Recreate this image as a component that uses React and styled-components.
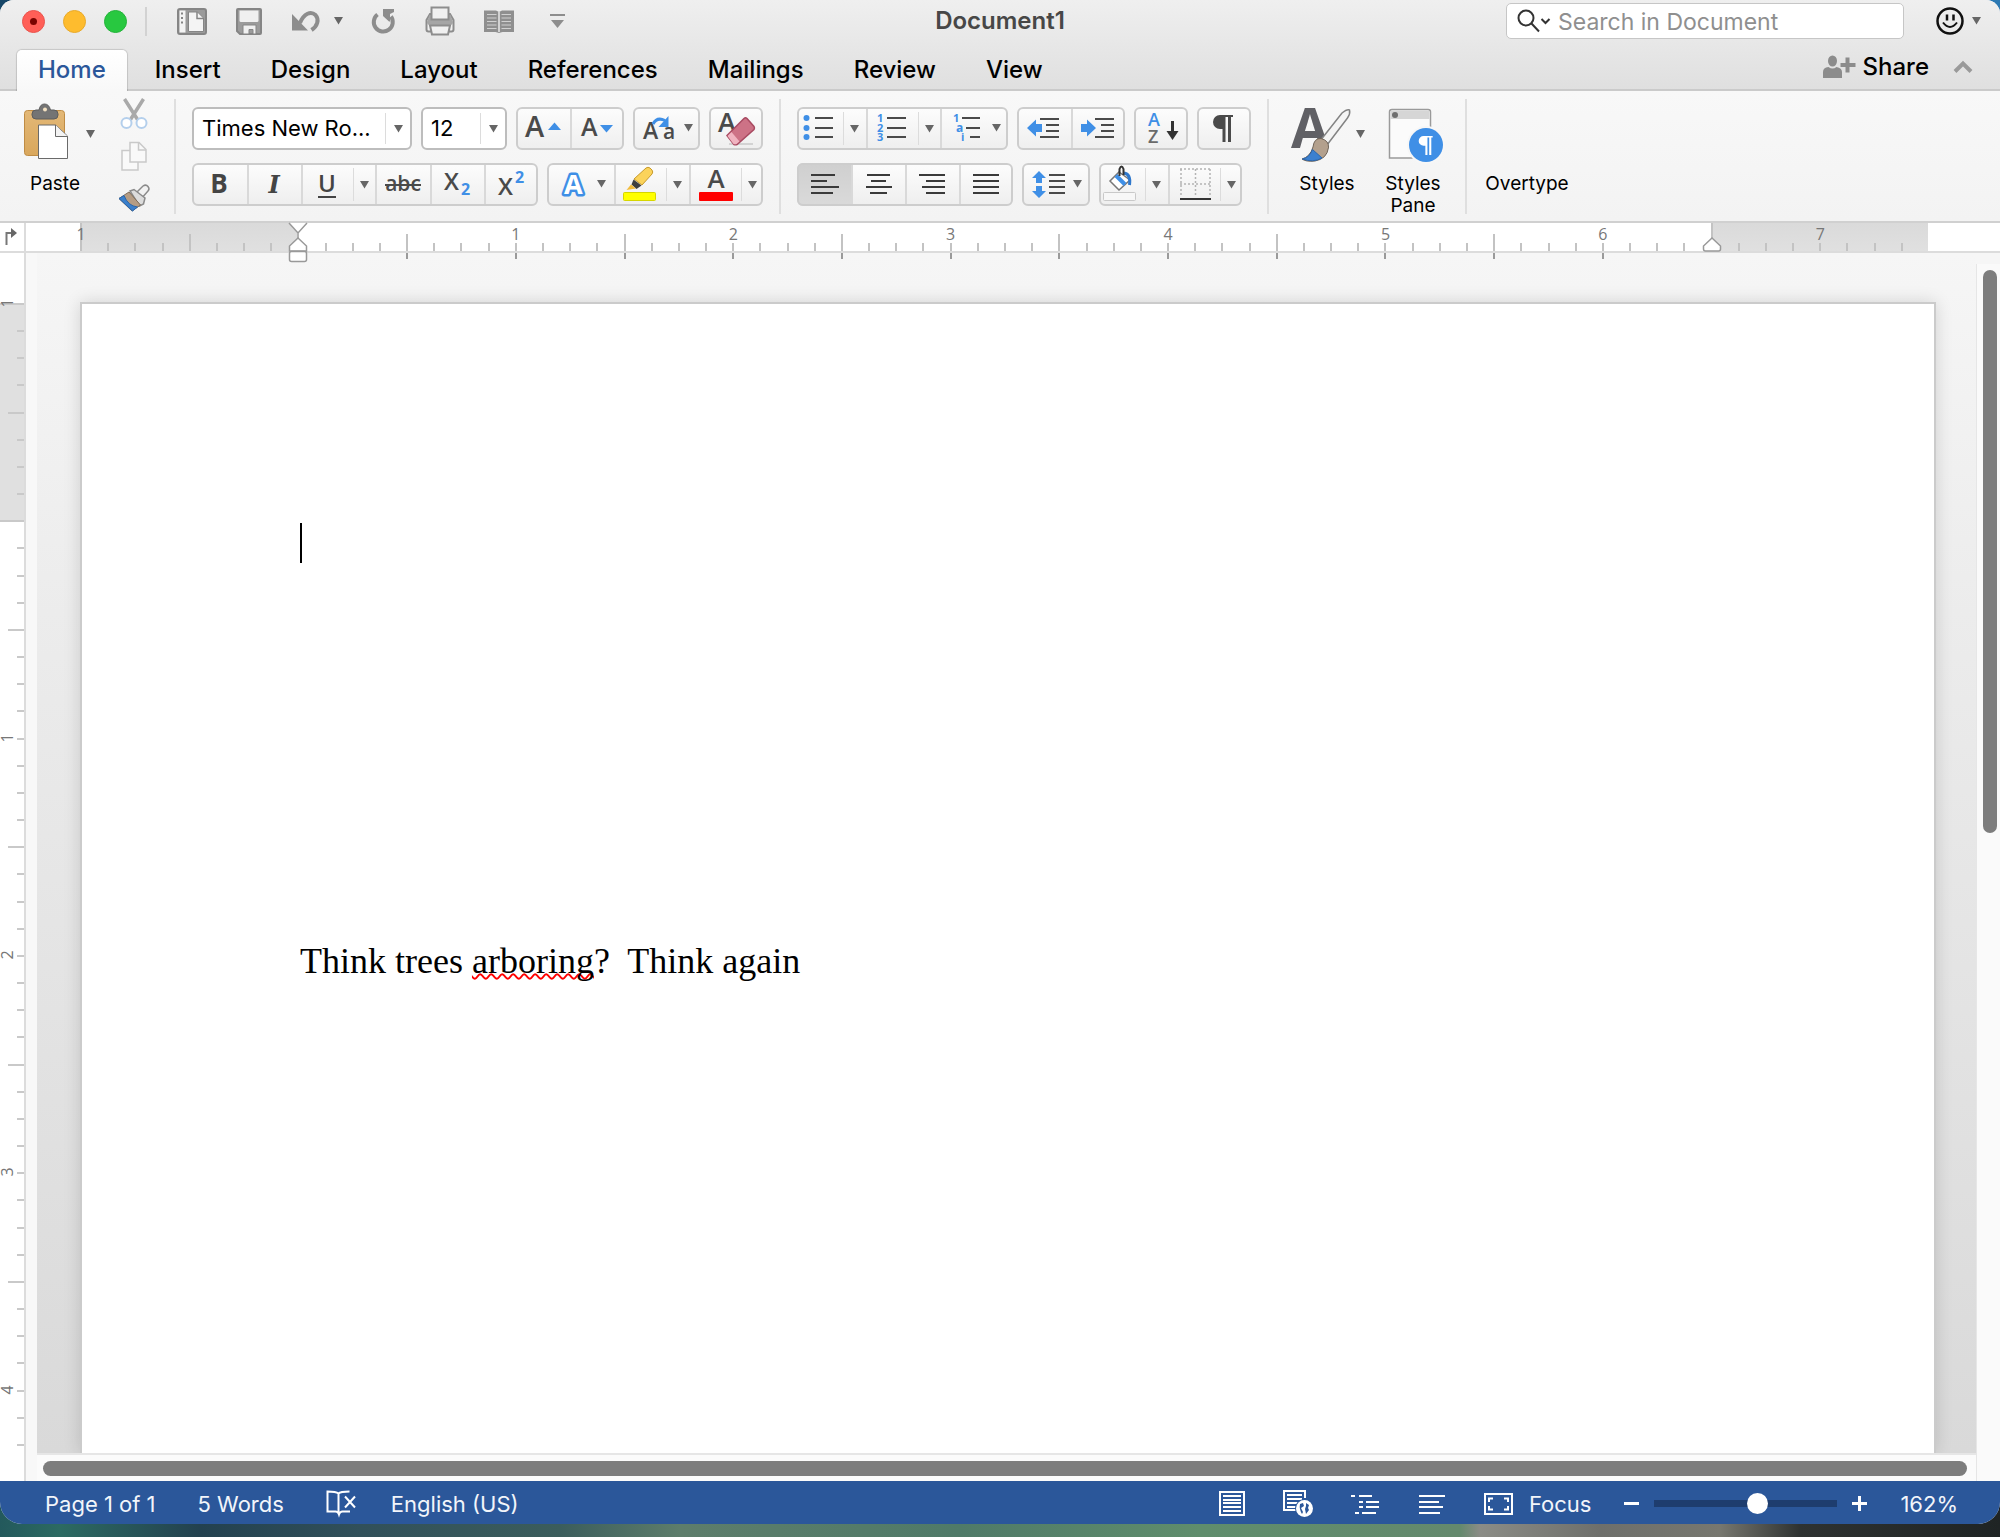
import React from "react";
import styled, { createGlobalStyle, css } from "styled-components";

const UI = `Inter, "Liberation Sans", sans-serif`;
const GLYPH = `"Open Sans", "Noto Sans", sans-serif`;
const BLUE = "#3f8fe6";
const INK = "#4a4a4a";

const GlobalStyle = createGlobalStyle`
  *, *::before, *::after { box-sizing: border-box; }
  body { margin: 0; font-family: ${UI}; color: #000; }
  button, input, select { font-family: inherit; }
  svg { display: block; flex: none; overflow: visible; }
`;

/* ---------- window frame ---------- */

const Desktop = styled.div`
  min-height: 100vh;
  display: flex;
  flex-direction: column;
  padding-bottom: 13px;
  background:
    linear-gradient(90deg, #164668 0 50%, #2d79b3 50%) top / 100% 40px no-repeat,
    linear-gradient(90deg, #23595c 0, #2c6a62 3%, #23414f 10%, #31505a 18%, #3b5d5c 28%, #5d7d6b 34%, #4f7a68 48%, #5f8d6c 60%, #64896d 73%, #8b8c86 74%, #6e6f6b 80%, #77776f 86%, #2e3231 90%, #1f2424 100%);
`;

const Window = styled.div`
  flex: 1;
  display: flex;
  flex-direction: column;
  border-radius: 14px 14px 22px 22px;
  overflow: hidden;
  background: #f6f6f6;
`;

const BareButton = styled.button`
  appearance: none;
  border: 0;
  padding: 0;
  margin: 0;
  background: none;
  color: inherit;
  display: flex;
  align-items: center;
  justify-content: center;
`;

const Header = styled.header`
  background: linear-gradient(#efefef, #dfdfdf);
  box-shadow: inset 0 -2px 0 #cacaca;
`;

const TitleBar = styled.div`
  height: 42px;
  display: grid;
  grid-template-columns: 1fr auto 1fr;
  align-items: center;
`;

const TitleLeft = styled.div`
  display: flex;
  align-items: center;
  padding-left: 22px;
`;

const Lights = styled.div`
  display: flex;
  gap: 18px;
`;

const Light = styled(BareButton)`
  width: 23px;
  height: 23px;
  border-radius: 50%;
  background: ${(p) => p.$fill};
  border: 1px solid ${(p) => p.$edge};
`;

const CloseDot = styled.span`
  width: 7px;
  height: 7px;
  border-radius: 50%;
  background: #7a0400;
`;

const TitleRule = styled.div`
  width: 2px;
  height: 29px;
  margin: 0 30px 0 18px;
  background: #d2d2d2;
`;

const QuickTools = styled.div`
  display: flex;
  align-items: center;
  gap: 29px;
`;

const UndoPair = styled.div`
  display: flex;
  align-items: center;
  gap: 13px;
`;

const DocTitle = styled.h1`
  margin: 0;
  font-size: 24px;
  line-height: 28px;
  font-weight: 600;
  color: #474747;
`;

const TitleRight = styled.div`
  display: flex;
  align-items: center;
  justify-content: flex-end;
  gap: 32px;
  padding-right: 19px;
`;

const SearchBox = styled.label`
  width: 398px;
  height: 36px;
  display: flex;
  align-items: center;
  padding-left: 10px;
  background: #fff;
  border: 1px solid #c6c6c6;
  border-radius: 5px;
`;

const SearchInput = styled.input`
  flex: 1;
  min-width: 0;
  height: 30px;
  border: 0;
  outline: 0;
  padding: 2px 0 0 6px;
  background: none;
  font-size: 23px;
  color: #000;
  &::placeholder { color: #8f8f8f; opacity: 1; }
`;

const FaceButton = styled(BareButton)`
  gap: 8px;
`;

const TabRow = styled.div`
  height: 49px;
  display: flex;
  align-items: flex-end;
  justify-content: space-between;
  padding: 0 27px 0 17px;
`;

const Tabs = styled.nav`
  display: flex;
  align-items: flex-end;
`;

const Tab = styled(BareButton)`
  height: 41px;
  padding: 0 25px 2px;
  font-size: 24px;
  font-weight: 500;
  border-radius: 5px 5px 0 0;
  ${(p) =>
    p.$active &&
    css`
      padding: 0 21px 2px;
      margin-right: 3px;
      color: #2b579a;
      background: linear-gradient(#fff, #f8f8f8);
      box-shadow: 0 0 1px 1px rgba(0, 0, 0, 0.14);
      clip-path: inset(-2px -2px 0 -2px);
    `}
`;

const ShareArea = styled.div`
  display: flex;
  align-items: center;
  gap: 24px;
  height: 49px;
`;

const ShareButton = styled(BareButton)`
  gap: 7px;
  font-size: 24px;
  font-weight: 500;
`;

/* ---------- ribbon ---------- */

const Ribbon = styled.section`
  display: flex;
  height: 132px;
  padding: 2px 12px 0;
  background: linear-gradient(#f8f8f8, #f3f3f3);
  border-bottom: 2px solid #d0d0d0;
`;

const RibbonRule = styled.div`
  flex: none;
  width: 2px;
  height: 115px;
  margin: 6px 16px 0;
  background: #dfdfdf;
`;

const BigButton = styled(BareButton)`
  flex: none;
  flex-direction: column;
  justify-content: flex-start;
  width: ${(p) => p.$w}px;
  height: 122px;
  margin-top: 4px;
  font-size: 19px;
  line-height: 22px;
`;

const BigGap = styled.div`
  flex: none;
  width: 8px;
`;

const BlankArt = styled.span`
  height: 76px;
`;

const ClipColumn = styled.div`
  flex: none;
  display: flex;
  flex-direction: column;
  width: 46px;
  margin-left: 14px;
`;

const ClipButton = styled(BareButton)`
  width: 44px;
  height: 42px;
`;

const ToolRows = styled.div`
  flex: none;
  display: flex;
  flex-direction: column;
  gap: 13px;
  padding-top: 14px;
`;

const ToolRow = styled.div`
  display: flex;
  gap: 9px;
`;

const Group = styled.div`
  position: relative;
  display: flex;
  height: 43px;
  border-radius: 6px;
  background: linear-gradient(#fdfdfd, #eeeeee);
  &::after {
    content: "";
    position: absolute;
    inset: 0;
    border: 2px solid #cdcdcd;
    border-radius: 6px;
    pointer-events: none;
  }
`;

const Tool = styled(BareButton)`
  align-items: flex-end;
  width: ${(p) => p.$w}px;
  height: 43px;
  background: ${(p) => (p.$on ? "linear-gradient(#cfcfcf, #dadada)" : "none")};
  &:first-child { border-radius: 6px 0 0 6px; }
  & + & { border-left: 2px solid #d9d9d9; }
`;

const DropTool = styled(BareButton)`
  width: ${(p) => p.$w}px;
  height: 43px;
  background: linear-gradient(#dcdcdc, #dcdcdc) left center / 1px 33px no-repeat;
  & + button { border-left: 2px solid #d9d9d9; }
`;

const Field = styled.label`
  position: relative;
  display: flex;
  width: ${(p) => p.$w}px;
  height: 43px;
  background: #fff;
  border: 2px solid #bdbdbd;
  border-radius: 6px;
`;

const Select = styled.select`
  appearance: none;
  width: 100%;
  border: 0;
  outline: 0;
  background: none;
  padding: 0 26px 1px 8px;
  font-size: 22px;
  color: #000;
`;

const FieldDrop = styled.span`
  position: absolute;
  inset: 4px 0 4px auto;
  width: 25px;
  display: flex;
  align-items: center;
  justify-content: center;
  border-left: 1px solid #dcdcdc;
  pointer-events: none;
`;

/* ---------- rulers ---------- */

const RulerBar = styled.div`
  position: relative;
  z-index: 1;
  display: flex;
  height: 30px;
  background: #fff;
  border-bottom: 2px solid #dcdcdc;
`;

const RulerCorner = styled(BareButton)`
  width: 26px;
  padding-right: 4px;
  border-right: 2px solid #dcdcdc;
`;

const Scale = styled.div`
  flex: 1;
  display: grid;
  grid-template-columns: repeat(68, 1fr);
  margin: 0 72px 0 54px;
`;

const Mark = styled.div`
  position: relative;
  background: ${(p) => (p.$margin ? "linear-gradient(#dadada, #e0e0e0)" : "#fff")};
  &::before {
    content: "";
    position: absolute;
    left: 0;
    bottom: 0;
    width: 2px;
    height: ${(p) => p.$len}px;
    background: #c3c3c3;
  }
  ${(p) =>
    p.$below &&
    css`
      &::after {
        content: "";
        position: absolute;
        left: 0;
        top: 30px;
        width: 2px;
        height: 6px;
        background: #9a9a9a;
      }
    `}
`;

const MarkText = styled.span`
  position: absolute;
  left: 1px;
  top: 1px;
  transform: translateX(-50%);
  font: 16px/20px ${GLYPH};
  color: #777;
`;

const Marker = styled.svg`
  position: absolute;
  left: ${(p) => p.$x}px;
  top: 0;
`;

const Workspace = styled.main`
  flex: 1;
  display: grid;
  grid-template-columns: 26px minmax(0, 1fr) 24px;
  grid-template-rows: minmax(0, 1fr);
`;

const SideRuler = styled.div`
  background: #fff;
  border-right: 2px solid #dcdcdc;
  padding: 50px 0 10px;
  display: grid;
  grid-template-rows: repeat(43, 1fr);
`;

const SideMark = styled.div`
  position: relative;
  background: ${(p) => (p.$margin ? "#e0e0e0" : "#fff")};
  &::before {
    content: "";
    position: absolute;
    right: 0;
    top: 0;
    width: ${(p) => p.$len}px;
    height: 2px;
    background: #c9c9c9;
  }
`;

const SideText = styled.span`
  position: absolute;
  left: -3px;
  top: -10px;
  width: 20px;
  text-align: center;
  transform: rotate(-90deg);
  font: 16px/20px ${GLYPH};
  color: #777;
`;

/* ---------- document ---------- */

const View = styled.div`
  display: flex;
  flex-direction: column;
  padding-left: 11px;
  background: #f8f8f8;
`;

const Canvas = styled.div`
  flex: 1;
  display: flex;
  padding: 49px 40px 0 44px;
  overflow: hidden;
  background: linear-gradient(#f6f6f6, #ececec 30%, #d9d9d9);
  border-bottom: 2px solid #e6e6e6;
`;

const Page = styled.article`
  flex: 1;
  padding: 219px 219px 0 218px;
  background: #fff;
  border: 2px solid #cbcbcb;
  border-bottom: 0;
  margin-left: -1px;
  box-shadow: 0 0 16px rgba(0, 0, 0, 0.14);
  font: 36px/36px "Liberation Serif", serif;
`;

const Line = styled.p`
  margin: 0;
  min-height: 42px;
  white-space: pre-wrap;
`;

const Cursor = styled.span`
  display: block;
  width: 2px;
  height: 40px;
  background: #000;
`;

const Misspelled = styled.span`
  text-decoration: underline wavy #f00 2px;
  text-decoration-skip-ink: none;
  text-underline-offset: 0;
`;

const HTrack = styled.div`
  height: 26px;
  padding: 6px 9px 0 6px;
  background: #fbfbfb;
`;

const HThumb = styled.div`
  height: 15px;
  border-radius: 8px;
  background: #7d7d7d;
`;

const VTrack = styled.div`
  margin-top: 11px;
  padding: 6px 3px 0 6px;
  background: #fafafa;
  border-left: 1px solid #e6e6e6;
`;

const VThumb = styled.div`
  height: 46.5%;
  border-radius: 8px;
  background: #7d7d7d;
`;

/* ---------- status bar ---------- */

const Status = styled.footer`
  height: 43px;
  display: flex;
  align-items: center;
  justify-content: space-between;
  padding: 2px 42px 0 45px;
  color: #f2f5fa;
  font-size: 22px;
  background: #2b579a;
`;

const StatusPart = styled.div`
  display: flex;
  align-items: center;
  gap: ${(p) => p.$gap}px;
`;

const StatusText = styled.span`
  padding-right: 8px;
`;

const FocusButton = styled(BareButton)`
  gap: 16px;
  font-size: 22px;
`;

const ZoomPart = styled.div`
  display: flex;
  align-items: center;
  gap: 14px;
`;

const ZoomRange = styled.input`
  appearance: none;
  width: 183px;
  height: 22px;
  margin: 0;
  background: linear-gradient(#1e3d6e, #1e3d6e) center / 100% 7px no-repeat;
  border-radius: 4px;
  &::-webkit-slider-thumb {
    appearance: none;
    width: 21px;
    height: 21px;
    border-radius: 50%;
    background: #fff;
  }
`;

/* ---------- drawings ---------- */

const Svg = ({ w, h, children, ...rest }) => (
  <svg width={w} height={h} viewBox={`0 0 ${w} ${h}`} fill="none" aria-hidden="true" {...rest}>
    {children}
  </svg>
);

const T = ({ size, fill = INK, weight = 600, family = GLYPH, children, ...rest }) => (
  <text fontSize={size} fill={fill} fontWeight={weight} fontFamily={family} {...rest}>
    {children}
  </text>
);

const Caret = ({ fill = "#666" }) => (
  <Svg w={9} h={8}><path d="M0 0h9L4.500 7.500z" fill={fill} /></Svg>
);

const Rows = ({ x1, x2, ys, c = INK }) =>
  ys.map((y, i) => (
    <path
      key={y}
      d={`M${Array.isArray(x1) ? x1[i] : x1} ${y}H${Array.isArray(x2) ? x2[i] : x2}`}
      stroke={c}
      strokeWidth="2"
    />
  ));

const G = "#8d8d8d";

const SidebarIcon = () => (
  <Svg w={30} h={27}>
    <rect x="1" y="1" width="28" height="25" rx="2" fill="#9b9b9b" stroke="#858585" strokeWidth="2" />
    <path d="M2.500 2.500h6v22h-6z" fill="#f4f4f4" />
    <path d="M4 5.500h2M4 10h2M4 14.500h2" stroke="#858585" strokeWidth="2" />
    <path d="M11.500 4h9l6 6v13.500h-15z" fill="#f4f4f4" stroke="#858585" />
    <path d="M20 4v6.500h6.500" stroke="#858585" strokeWidth="1.500" />
  </Svg>
);

const SaveIcon = () => (
  <Svg w={26} h={27}>
    <path d="M2 1h22a1 1 0 0 1 1 1v23a1 1 0 0 1-1 1H4l-3-3V2a1 1 0 0 1 1-1z" fill="#9b9b9b" stroke="#858585" strokeWidth="2" />
    <path d="M3.500 2.500h19v10q0 1.500-1.500 1.500H5q-1.500 0-1.500-1.500z" fill="#f0f0f0" />
    <path d="M7 26v-9h13v9h-3v-4.500h-4V26z" fill="#f0f0f0" stroke="#858585" />
  </Svg>
);

const UndoIcon = () => (
  <Svg w={30} h={24}>
    <path d="M9 14C13 4 20 2 24.500 6c4 4.500 2 11-4 15" stroke={G} strokeWidth="4" />
    <path d="M1 5l16 16.500H1z" fill={G} />
  </Svg>
);

const RedoIcon = () => (
  <Svg w={24} h={26}>
    <path d="M5.500 6.500A9.500 9.500 0 1 0 19 8.500" stroke={G} strokeWidth="4" />
    <path d="M11 1h11v3l-4 2v7.500h-1L11 8z" fill={G} />
  </Svg>
);

const PrintIcon = () => (
  <Svg w={30} h={30}>
    <path d="M5 8L1.500 14v9.500q0 2 2 2h23q2 0 2-2V14L25 8z" fill="#f0f0f0" stroke={G} strokeWidth="2" />
    <path d="M4.500 9h21L28 16q0 3-3 3H5q-3 0-3-3z" fill="#a5a5a5" />
    <path d="M6.500 1.500h17v12h-17zM5 19.500h20l-2 9H7z" fill="#f0f0f0" stroke={G} strokeWidth="2" />
  </Svg>
);

const BookIcon = () => (
  <Svg w={30} h={24}>
    <path d="M0 1.500h12l3 1.500 3-1.500h12V23H18.500L15 24l-3.500-1H0z" fill="#8f8f8f" />
    <path d="M15 3v20" stroke="#e9e9e9" strokeWidth="1.500" />
    <path d="M3 5.500h9.500M3 9h9.500M3 12.500h9.500M3 16h9.500M3 19.500h9.500M17.500 5.500H27M17.500 9H27M17.500 12.500H27M17.500 16H27M17.500 19.500H27" stroke="#d0d0d0" strokeWidth="1.200" />
  </Svg>
);

const CustomizeIcon = () => (
  <Svg w={29} h={14}><path d="M7 0h15v2H7zM8 6h13l-6.500 8z" fill={G} /></Svg>
);

const SearchIcon = () => (
  <Svg w={35} h={24}>
    <circle cx="9" cy="9" r="7.500" stroke="#333" strokeWidth="2" />
    <path d="M14.500 14.500l7.500 8M24.500 10l4 4 4-4" stroke="#333" strokeWidth="2" />
  </Svg>
);

const FaceIcon = () => (
  <Svg w={28} h={28}>
    <circle cx="14" cy="14" r="12.500" stroke="#111" strokeWidth="2.500" />
    <path d="M11 7.500v6M17.500 7.500v6" stroke="#111" strokeWidth="2.500" />
    <path d="M7 15.500q7 9 14 0" stroke="#111" strokeWidth="2" />
  </Svg>
);

const ShareIcon = () => (
  <Svg w={33} h={24}>
    <ellipse cx="9.500" cy="6" rx="4.500" ry="5.500" fill="#8c8c8c" />
    <path d="M0 23v-6q0-4.500 5.500-5 4 3 8 0Q19 13 19 17v6z" fill="#8c8c8c" />
    <path d="M24.500 2.500v15M17.500 10h15" stroke="#8c8c8c" strokeWidth="4" />
  </Svg>
);

const CollapseIcon = () => (
  <Svg w={20} h={14}><path d="M2 11.500l8-8 8 8" stroke="#9a9a9a" strokeWidth="4" /></Svg>
);

const PasteIcon = () => (
  <Svg w={86} h={76}>
    <defs>
      <linearGradient id="board" x2="0" y2="1"><stop stopColor="#e3b877" /><stop offset="1" stopColor="#d9a75c" /></linearGradient>
    </defs>
    <rect x="12.500" y="13.500" width="40" height="45" rx="3" fill="url(#board)" stroke="#bf8c45" />
    <path d="M20 17q0-4 4-4h3q1-6 5.500-6t6 6H42q4 0 4 4v1q0 4-4 4H24q-4 0-4-4z" fill="#747474" stroke="#5d5d5d" />
    <circle cx="33" cy="12.500" r="2" fill="#f4e2c2" />
    <path d="M26.500 28h17L55.500 39v22.500h-29z" fill="#fff" stroke="#6a6a6a" />
    <path d="M43.500 28v11.500h12" fill="#f3f3f3" stroke="#6a6a6a" />
    <path d="M74 33h9l-4.500 8z" fill="#666" />
  </Svg>
);

const ScissorsIcon = () => (
  <Svg w={28} h={32}>
    <path d="M4.500 1L17.500 21.500M23.500 1L10.500 21.500" stroke="#a9a9a9" strokeWidth="3.500" />
    <circle cx="6.500" cy="25" r="5" fill="#fff" stroke="#b4cfec" strokeWidth="2" />
    <circle cx="21.500" cy="25" r="5" fill="#fff" stroke="#b4cfec" strokeWidth="2" />
  </Svg>
);

const CopyIcon = () => (
  <Svg w={26} h={30}>
    <path d="M1 9.500h16V29H1z" fill="#f9f9f9" stroke="#c9c9c9" strokeWidth="1.500" />
    <path d="M9 1.500h9l7 7V21H9z" fill="#f9f9f9" stroke="#c9c9c9" strokeWidth="1.500" />
    <path d="M17.500 1.500V9H25" stroke="#c9c9c9" strokeWidth="1.500" />
  </Svg>
);

const PainterIcon = () => (
  <Svg w={32} h={28}>
    <path d="M17 10l8-8q3-2 5 .500t0 4.500l-7 8z" fill="#f2f2f2" stroke="#8b8b8b" strokeWidth="1.500" />
    <path d="M12 7l4-1.500L27 14l-1.500 6-4 2z" fill="#dcdcdc" stroke="#8b8b8b" strokeWidth="1.500" />
    <path d="M11 8L1 14.500 14 27l8.500-6z" fill="#b49c84" stroke="#7d6c5a" />
    <path d="M1 14.500L14.500 27l5-4Q10 22 6 11.500z" fill="#3a7fcb" stroke="#2b66ab" />
  </Svg>
);

const GrowFont = () => (
  <Svg w={52} h={44}>
    <T size="29" x="8" y="31">A</T>
    <path d="M31 24h13l-6.500-7.500z" fill={BLUE} />
  </Svg>
);

const ShrinkFont = () => (
  <Svg w={52} h={44}>
    <T size="25" x="9" y="30">A</T>
    <path d="M28 19h13l-6.500 7.500z" fill={BLUE} />
  </Svg>
);

const ChangeCase = () => (
  <Svg w={67} h={44}>
    <T size="23" x="10" y="33">A</T>
    <T size="21" x="30" y="33">a</T>
    <path d="M20 18q4-7.500 12-3.500" stroke={BLUE} strokeWidth="3" />
    <path d="M35.500 10v11H25.500z" fill={BLUE} />
    <path d="M51 18h9l-4.500 7.500z" fill="#666" />
  </Svg>
);

const ClearFormat = () => (
  <Svg w={54} h={44}>
    <T size="27" x="9" y="26">A</T>
    <path d="M20 38h24" stroke="#d3d3d3" strokeWidth="2" />
    <path d="M18 29.500L35 12.500q1.500-1.500 3 0l7 8q1 1.500 0 3L28 38.500q-1.500.500-3 0z" fill="#cd7286" stroke="#a84a61" strokeWidth="1.500" />
    <path d="M18.500 30l6 8q2 .500 3 0l3-2.500-8-9.500z" fill="#f0b3c0" />
  </Svg>
);

const Glyph = ({ children, u, ...rest }) => (
  <Svg w={52} h={44}>
    <T x="25" y="31" textAnchor="middle" size="26" weight="700" fill="#444" {...rest}>{children}</T>
    {u && <path d="M16 35h18" stroke="#444" strokeWidth="2" />}
  </Svg>
);

const StrikeIcon = () => (
  <Svg w={52} h={44}>
    <T x="25" y="29" textAnchor="middle" size="21">abc</T>
    <path d="M7 23h36" stroke={INK} strokeWidth="2" />
  </Svg>
);

const ScriptIcon = ({ up }) => (
  <Svg w={52} h={44}>
    <T x="12" y={up ? 33 : 28} size="24">X</T>
    <T x="29" y={up ? 21 : 33} size="16" weight="700" fill={BLUE}>2</T>
  </Svg>
);

const EffectsIcon = () => (
  <Svg w={67} h={44}>
    <g stroke="#a9d0f7" strokeWidth="7" strokeLinejoin="round"><T x="17" y="32" size="27" weight="700" fill="#fff" stroke={BLUE} strokeWidth="5" paintOrder="stroke">A</T></g>
    <path d="M50 18h9l-4.500 7.500z" fill="#666" />
  </Svg>
);

const HighlightIcon = () => (
  <Svg w={50} h={44}>
    <path d="M18 17L30 6q2-1.500 4 0l2 2q1.500 2 0 4L26 23z" fill="#fbd35b" stroke="#c79a2b" />
    <path d="M17.500 17.500l8 6-5 3.500-5-4.500z" fill="#3f3f3f" />
    <path d="M15 22.500l5 4-9.500 1.500z" fill="#f2bc3c" />
    <rect x="7.500" y="30.500" width="32" height="8" rx="1" fill="#ff0" stroke="#d6d600" />
  </Svg>
);

const FontColorIcon = () => (
  <Svg w={50} h={44}>
    <T x="25" y="26" textAnchor="middle" size="26">A</T>
    <rect x="8" y="30" width="34" height="9" rx="1" fill="#f00" />
  </Svg>
);

const BulletsIcon = () => (
  <Svg w={46} h={44}>
    {[12, 22, 31].map((y) => <circle key={y} cx="9.500" cy={y} r="3" fill={BLUE} />)}
    <Rows x1={18} x2={36} ys={[12, 22, 31]} />
  </Svg>
);

const NumbersIcon = () => (
  <Svg w={50} h={44}>
    {[16, 26, 35].map((y, i) => <T key={y} x="9" y={y} size="11" weight="700" fill={BLUE}>{i + 1}</T>)}
    <Rows x1={19} x2={38} ys={[12, 22, 31]} />
  </Svg>
);

const LevelsIcon = () => (
  <Svg w={66} h={44}>
    <T x="11" y="16" size="11" weight="700" fill={BLUE}>1</T>
    <T x="14" y="26" size="12" weight="700" fill={BLUE}>a</T>
    <T x="19" y="35" size="11" weight="700" fill={BLUE}>i</T>
    <Rows x1={[20, 24, 28]} x2={38} ys={[12, 22, 31]} />
    <path d="M50 18h9l-4.500 7.500z" fill="#666" />
  </Svg>
);

const IndentIcon = ({ out }) => (
  <Svg w={52} h={44}>
    {out
      ? <path d="M9 22l9-8.500V18h6v8h-6v4.500z" fill={BLUE} />
      : <path d="M23 22l-9-8.500V18H8v8h6v4.500z" fill={BLUE} />}
    <Rows x1={[22, 28, 28, 22]} x2={41} ys={[13, 19, 25, 31]} />
  </Svg>
);

const SortIcon = () => (
  <Svg w={54} h={44}>
    <T x="14" y="20" size="18" fill={BLUE}>A</T>
    <T x="14" y="37" size="18" fill="#6a6a6a">Z</T>
    <path d="M38.500 15v12" stroke="#333" strokeWidth="3" />
    <path d="M32.500 25h12l-6 9z" fill="#333" />
  </Svg>
);

const PilcrowShape = ({ x, y, k = 1, fill }) => (
  <path transform={`translate(${x} ${y}) scale(${k})`} d="M8 0h13v2h-2v25h-3V2h-2.500v25h-3V14H8A7 7 0 0 1 8 0z" fill={fill} />
);

const PilcrowIcon = () => <Svg w={54} h={44}><PilcrowShape x={15} y={9} fill={INK} /></Svg>;

const alignRows = {
  left: [[13, 13, 13, 13], [37, 29, 41, 35]],
  center: [[14, 18, 13, 17], [37, 33, 39, 34]],
  right: [[12, 19, 15, 19], [38, 38, 38, 38]],
  justify: [[12, 12, 12, 12], [38, 38, 38, 38]],
};

const AlignIcon = ({ kind }) => (
  <Svg w={52} h={44}>
    <Rows x1={alignRows[kind][0]} x2={alignRows[kind][1]} ys={[13, 19, 25, 31]} c="#3a3a3a" />
  </Svg>
);

const SpacingIcon = () => (
  <Svg w={68} h={44}>
    <path d="M17 9l7 7h-4v5h-6v-5h-4zM17 36l-7-7h4v-5h6v5h4z" fill={BLUE} />
    <Rows x1={27} x2={43} ys={[13, 19, 25, 31]} />
    <path d="M51 18h9l-4.500 7.500z" fill="#666" />
  </Svg>
);

const ShadingIcon = () => (
  <Svg w={46} h={44}>
    <rect x="4.500" y="30.500" width="32" height="8" rx="1" fill="#f7f7f7" stroke="#c9c9c9" />
    <path d="M20 10l11 8-11 10-9-9z" fill="#fff" stroke="#777" strokeWidth="1.500" />
    <path d="M17 13.500l9 9" stroke={BLUE} strokeWidth="4" />
    <path d="M25 11q7 1 5.500 12" stroke="#2f78cc" strokeWidth="3" />
    <path d="M20.500 14V7q2-5 4 0v6" stroke="#333" strokeWidth="2" />
  </Svg>
);

const BordersIcon = () => (
  <Svg w={50} h={44}>
    <path d="M10 7h31M10 22h31M11 7v28M25.500 7v28M40 7v28" stroke="#b4b4b4" strokeWidth="1.500" strokeDasharray="2 2" />
    <path d="M10 37h31" stroke="#333" strokeWidth="2" />
  </Svg>
);

const StylesIcon = () => (
  <Svg w={84} h={76}>
    <T x="6" y="51" size="55" weight="700" fill="#606065">A</T>
    <path d="M35 44L57 16q5-4 7.500-3 1 4-2 8L42 48z" fill="#f4f4f4" stroke="#838383" strokeWidth="1.500" />
    <path d="M28 50q1-9 8-8.500 8 2 7.500 9Q42 62 30 64q-9 1-13-2 8-2 11-12z" fill="#b3a08d" stroke="#6f6357" />
    <path d="M17.500 62q7-1.500 10-9.500l9.500 8.500q-9 5-19.500 1z" fill="#3b80cf" stroke="#2a66ad" />
    <path d="M71 33h9l-4.500 8z" fill="#666" />
  </Svg>
);

const StylesPaneIcon = () => (
  <Svg w={72} h={76}>
    <path d="M12.500 61V15q0-2.500 2.500-2.500h36q2.500 0 2.500 2.500v46z" fill="#fbfbfb" stroke="#9a9a9a" strokeWidth="1.500" />
    <path d="M13.500 22v-7q0-1.500 1.500-1.500h36q1.500 0 1.500 1.500v7z" fill="#d6d6d6" />
    <circle cx="18" cy="18" r="3" fill="#6f6f6f" />
    <circle cx="49" cy="48" r="19" fill="#f7f7f7" />
    <circle cx="49" cy="48" r="17" fill={BLUE} />
    <PilcrowShape x={41} y={39} k={0.7} fill="#fff" />
  </Svg>
);

const TabStopIcon = () => (
  <Svg w={16} h={20}><path d="M4.500 18V6H9" stroke="#777" strokeWidth="2" /><path d="M9 1l6 5-6 5z" fill="#666" /></Svg>
);

const ProofIcon = () => (
  <Svg w={31} h={28}>
    <path d="M12.500 3.500Q10 1.500 1.500 1.500v20h8q2.500 0 3.500 3 1-3 3.500-3h7.500M12.500 3.500q2-2 11-2M12.500 3.500V24" stroke="#fff" strokeWidth="2" />
    <path d="M19 6.500l10 11M29 6.500l-10 11" stroke="#fff" strokeWidth="2" />
  </Svg>
);

const PrintViewIcon = () => (
  <Svg w={26} h={26}>
    <rect x="1" y="1" width="24" height="23" stroke="#fff" strokeWidth="2" />
    <Rows x1={4} x2={22} ys={[5, 9, 12, 16, 20]} c="#fff" />
  </Svg>
);

const WebViewIcon = () => (
  <Svg w={30} h={28}>
    <path d="M13 20H1V1h21v7" stroke="#fff" strokeWidth="2" />
    <Rows x1={4} x2={[19, 19, 15, 13]} ys={[5, 9, 13, 17]} c="#fff" />
    <circle cx="21.500" cy="18.500" r="9.500" fill="#2b579a" />
    <circle cx="21.500" cy="18.500" r="8.500" fill="#fff" />
    <path d="M17 14l3-1 1 3-3 2 2 4-1 2q-3-5-2-10zM23 13l3 2-1 3 1 2-3 4-1-5 1-3z" fill="#2b579a" />
  </Svg>
);

const OutlineIcon = () => (
  <Svg w={29} h={22}>
    <path d="M0 3h4M8 3h13M8 9h4M15 9h13M8 14h4M15 14h13M4 20h4M11 20h14" stroke="#fff" strokeWidth="2" />
  </Svg>
);

const DraftIcon = () => (
  <Svg w={28} h={22}><Rows x1={1} x2={[27, 21, 25, 22]} ys={[3, 9, 14, 20]} c="#fff" /></Svg>
);

const FocusIcon = () => (
  <Svg w={29} h={22}>
    <rect x="1" y="1" width="27" height="20" stroke="#fff" strokeWidth="2" />
    <path d="M5 9V5.500h4M20 5.500h4V9M5 13v3.500h4M20 16.500h4V13" stroke="#fff" strokeWidth="2" />
  </Svg>
);

/* ---------- page data ---------- */

const tabs = ["Home", "Insert", "Design", "Layout", "References", "Mailings", "Review", "View"];

const scaleMarks = Array.from({ length: 68 }, (_, i) => {
  const eighths = i - 8;
  const whole = eighths % 8 === 0;
  const half = !whole && eighths % 4 === 0;
  return {
    i,
    margin: i < 8 || i >= 60,
    len: i === 0 || i === 60 ? 28 : half ? 17 : 8,
    below: (whole || half) && eighths > 0 && i < 60,
    text: whole && eighths !== 0 ? Math.abs(eighths / 8) : null,
  };
});

const sideMarks = Array.from({ length: 43 }, (_, i) => {
  const whole = i % 8 === 0;
  return {
    i,
    margin: i < 8,
    len: i === 0 || i === 8 ? 24 : i % 8 === 4 ? 16 : 7,
    text: whole && i !== 8 ? Math.abs(i / 8 - 1) : null,
  };
});

const Drop = ({ w = 22, label }) => (
  <DropTool $w={w} aria-label={label}><Caret /></DropTool>
);

export default function App() {
  return (
    <Desktop>
      <GlobalStyle />
      <Window>
        <Header>
          <TitleBar>
            <TitleLeft>
              <Lights>
                <Light $fill="#ff5f57" $edge="#e9544d" aria-label="Close"><CloseDot /></Light>
                <Light $fill="#febc2e" $edge="#e8a92a" aria-label="Minimize" />
                <Light $fill="#28c840" $edge="#24b33a" aria-label="Full screen" />
              </Lights>
              <TitleRule />
              <QuickTools>
                <BareButton aria-label="New from template"><SidebarIcon /></BareButton>
                <BareButton aria-label="Save"><SaveIcon /></BareButton>
                <UndoPair>
                  <BareButton aria-label="Undo"><UndoIcon /></BareButton>
                  <BareButton aria-label="Undo list"><Caret /></BareButton>
                </UndoPair>
                <BareButton aria-label="Repeat"><RedoIcon /></BareButton>
                <BareButton aria-label="Print"><PrintIcon /></BareButton>
                <BareButton aria-label="Read"><BookIcon /></BareButton>
                <BareButton aria-label="Customize toolbar"><CustomizeIcon /></BareButton>
              </QuickTools>
            </TitleLeft>
            <DocTitle>Document1</DocTitle>
            <TitleRight>
              <SearchBox>
                <SearchIcon />
                <SearchInput type="text" placeholder="Search in Document" aria-label="Search in Document" />
              </SearchBox>
              <FaceButton aria-label="Feedback"><FaceIcon /><Caret /></FaceButton>
            </TitleRight>
          </TitleBar>
          <TabRow>
            <Tabs>
              {tabs.map((t, i) => <Tab key={t} $active={i === 0}>{t}</Tab>)}
            </Tabs>
            <ShareArea>
              <ShareButton><ShareIcon />Share</ShareButton>
              <BareButton aria-label="Collapse ribbon"><CollapseIcon /></BareButton>
            </ShareArea>
          </TabRow>
        </Header>

        <Ribbon>
          <BigButton $w={86}><PasteIcon />Paste</BigButton>
          <ClipColumn>
            <ClipButton aria-label="Cut"><ScissorsIcon /></ClipButton>
            <ClipButton aria-label="Copy"><CopyIcon /></ClipButton>
            <ClipButton aria-label="Format painter"><PainterIcon /></ClipButton>
          </ClipColumn>
          <RibbonRule />
          <ToolRows>
            <ToolRow>
              <Field $w={220}>
                <Select aria-label="Font"><option>Times New Ro...</option></Select>
                <FieldDrop><Caret /></FieldDrop>
              </Field>
              <Field $w={86}>
                <Select aria-label="Font size"><option>12</option></Select>
                <FieldDrop><Caret /></FieldDrop>
              </Field>
              <Group>
                <Tool $w={54} aria-label="Increase font size"><GrowFont /></Tool>
                <Tool $w={54} aria-label="Decrease font size"><ShrinkFont /></Tool>
              </Group>
              <Group><Tool $w={67} aria-label="Change case"><ChangeCase /></Tool></Group>
              <Group><Tool $w={54} aria-label="Clear formatting"><ClearFormat /></Tool></Group>
            </ToolRow>
            <ToolRow>
              <Group>
                <Tool $w={55} aria-label="Bold"><Glyph>B</Glyph></Tool>
                <Tool $w={54} aria-label="Italic"><Glyph family={`"DejaVu Serif", serif`} fontStyle="italic" size="24">I</Glyph></Tool>
                <Tool $w={52} aria-label="Underline"><Glyph u weight="600" y="30" size="24">U</Glyph></Tool>
                <Drop label="Underline style" />
                <Tool $w={55} aria-label="Strikethrough"><StrikeIcon /></Tool>
                <Tool $w={54} aria-label="Subscript"><ScriptIcon /></Tool>
                <Tool $w={54} aria-label="Superscript"><ScriptIcon up /></Tool>
              </Group>
              <Group>
                <Tool $w={67} aria-label="Text effects"><EffectsIcon /></Tool>
                <Tool $w={52} aria-label="Highlight"><HighlightIcon /></Tool>
                <Drop w={23} label="Highlight color" />
                <Tool $w={52} aria-label="Font color"><FontColorIcon /></Tool>
                <Drop label="Font color list" />
              </Group>
            </ToolRow>
          </ToolRows>
          <RibbonRule />
          <ToolRows>
            <ToolRow>
              <Group>
                <Tool $w={46} aria-label="Bullets"><BulletsIcon /></Tool>
                <Drop w={23} label="Bullet list" />
                <Tool $w={52} aria-label="Numbering"><NumbersIcon /></Tool>
                <Drop label="Numbering list" />
                <Tool $w={68} aria-label="Multilevel list"><LevelsIcon /></Tool>
              </Group>
              <Group>
                <Tool $w={54} aria-label="Decrease indent"><IndentIcon out /></Tool>
                <Tool $w={54} aria-label="Increase indent"><IndentIcon /></Tool>
              </Group>
              <Group><Tool $w={54} aria-label="Sort"><SortIcon /></Tool></Group>
              <Group><Tool $w={54} aria-label="Show marks"><PilcrowIcon /></Tool></Group>
            </ToolRow>
            <ToolRow>
              <Group>
                {Object.keys(alignRows).map((k) => (
                  <Tool key={k} $w={54} $on={k === "left"} aria-label={`Align ${k}`}><AlignIcon kind={k} /></Tool>
                ))}
              </Group>
              <Group><Tool $w={68} aria-label="Line spacing"><SpacingIcon /></Tool></Group>
              <Group>
                <Tool $w={46} aria-label="Shading"><ShadingIcon /></Tool>
                <Drop w={23} label="Shading color" />
                <Tool $w={52} aria-label="Borders"><BordersIcon /></Tool>
                <Drop label="Border list" />
              </Group>
            </ToolRow>
          </ToolRows>
          <RibbonRule />
          <BigButton $w={84}><StylesIcon />Styles</BigButton>
          <BigGap />
          <BigButton $w={72}><StylesPaneIcon />Styles Pane</BigButton>
          <RibbonRule />
          <BigButton $w={88}><BlankArt />Overtype</BigButton>
        </Ribbon>

        <RulerBar>
          <RulerCorner aria-label="Tab stop"><TabStopIcon /></RulerCorner>
          <Scale>
            {scaleMarks.map((m) => (
              <Mark key={m.i} $margin={m.margin} $len={m.len} $below={m.below}>
                {m.text !== null && <MarkText>{m.text}</MarkText>}
                {m.i === 8 && (
                  <Marker $x={-9} width="20" height="40" viewBox="0 0 20 40">
                    <path d="M1 0l9 10 9-10M10 10v5" fill="#fff" stroke="#999" strokeWidth="1.500" />
                    <path d="M10 15l8.500 8v5h-17v-5z" fill="#fff" stroke="#999" strokeWidth="1.500" />
                    <rect x="1.500" y="28.500" width="17" height="10" rx="2" fill="#fff" stroke="#999" strokeWidth="1.500" />
                  </Marker>
                )}
                {m.i === 60 && (
                  <Marker $x={-9} width="20" height="30" viewBox="0 0 20 30">
                    <path d="M10 15l8.500 8v3q0 2-2 2h-13q-2 0-2-2v-3z" fill="#fff" stroke="#999" strokeWidth="1.500" />
                  </Marker>
                )}
              </Mark>
            ))}
          </Scale>
        </RulerBar>

        <Workspace>
          <SideRuler>
            {sideMarks.map((m) => (
              <SideMark key={m.i} $margin={m.margin} $len={m.len}>
                {m.text !== null && <SideText>{m.text}</SideText>}
              </SideMark>
            ))}
          </SideRuler>
          <View>
            <Canvas>
              <Page>
                <Line><Cursor /></Line>
                {Array.from({ length: 9 }, (_, i) => <Line key={i} />)}
                <Line>Think trees <Misspelled>arboring</Misspelled>?{"  "}Think again</Line>
              </Page>
            </Canvas>
            <HTrack><HThumb /></HTrack>
          </View>
          <VTrack><VThumb /></VTrack>
        </Workspace>

        <Status>
          <StatusPart $gap={34}>
            <StatusText>Page 1 of 1</StatusText>
            <StatusText>5 Words</StatusText>
            <BareButton aria-label="Proofing"><ProofIcon /></BareButton>
            <StatusText>English (US)</StatusText>
          </StatusPart>
          <StatusPart $gap={32}>
            <StatusPart $gap={38}>
              <BareButton aria-label="Print layout"><PrintViewIcon /></BareButton>
              <BareButton aria-label="Web layout"><WebViewIcon /></BareButton>
              <BareButton aria-label="Outline"><OutlineIcon /></BareButton>
              <BareButton aria-label="Draft"><DraftIcon /></BareButton>
              <FocusButton><FocusIcon />Focus</FocusButton>
            </StatusPart>
            <ZoomPart>
              <BareButton aria-label="Zoom out"><Svg w={17} h={17}><path d="M1 8.500h15" stroke="#fff" strokeWidth="3" /></Svg></BareButton>
              <ZoomRange type="range" min="0" max="100" defaultValue="57" aria-label="Zoom" />
              <BareButton aria-label="Zoom in"><Svg w={17} h={17}><path d="M1 8.500h15M8.500 1v15" stroke="#fff" strokeWidth="3" /></Svg></BareButton>
            </ZoomPart>
            <span>162%</span>
          </StatusPart>
        </Status>
      </Window>
    </Desktop>
  );
}
